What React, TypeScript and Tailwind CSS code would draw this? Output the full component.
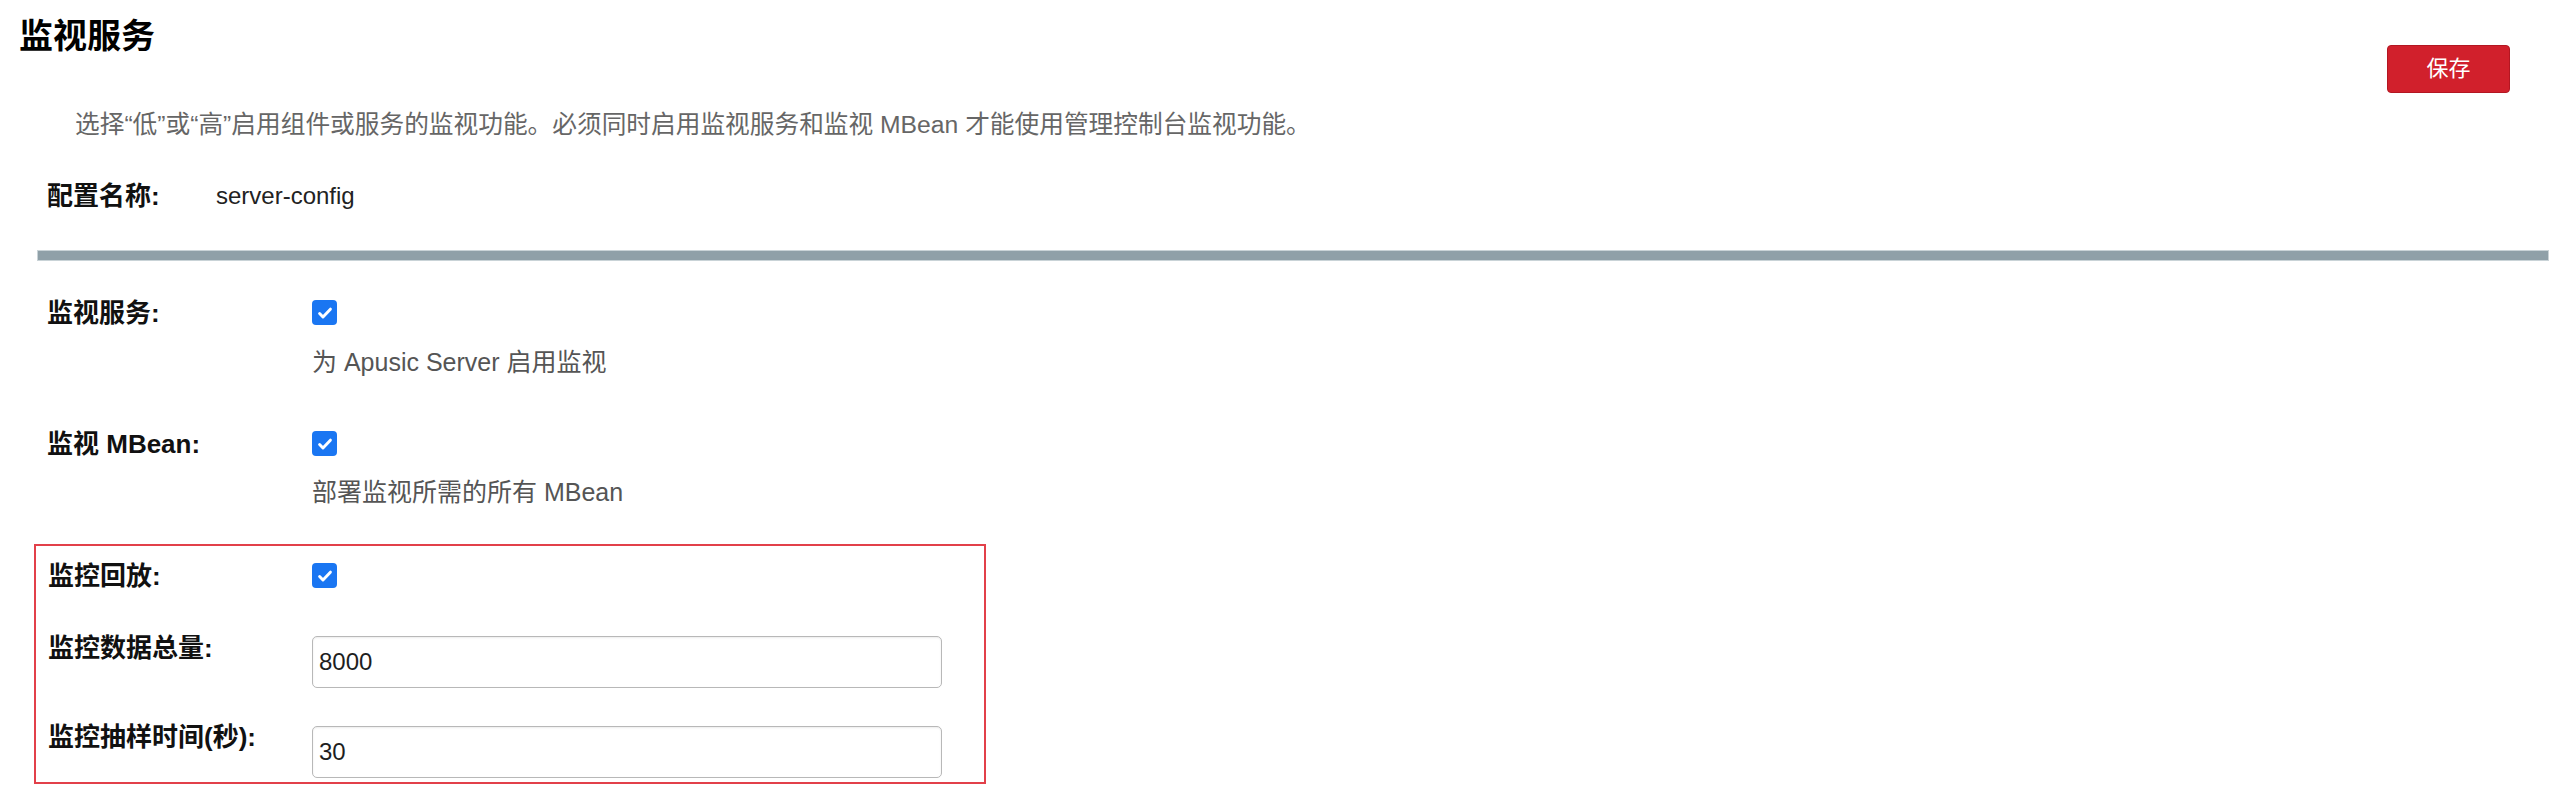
import React from 'react';

const FONT = "font-['Liberation_Sans','Noto_Sans_CJK_SC',sans-serif]";

function CheckBox() {
  return (
    <span className="flex items-center justify-center w-[25px] h-[25px] rounded-[4px] bg-[#1a76f2]">
      <svg width="18" height="18" viewBox="0 0 16 16" fill="none">
        <path d="M3.2 8.4l3 3.1L12.8 4.6" stroke="white" strokeWidth="2.6" strokeLinecap="round" strokeLinejoin="round" />
      </svg>
    </span>
  );
}

function TextField({ value }: { value: string }) {
  return (
    <input
      type="text"
      value={value}
      readOnly
      className={`${FONT} w-[630px] h-[52px] border border-[#b8b8b8] rounded-[5px] px-[6px] text-[24px] text-[#1e1e1e] bg-white shadow-[inset_0_1px_2px_rgba(0,0,0,0.08)] outline-none`}
    />
  );
}

export default function App() {
  return (
    <div className={`${FONT} min-h-screen bg-white text-[#111]`}>
      {/* Header */}
      <div className="flex justify-between items-start">
        <h1 className="ml-[19px] mt-[19px] text-[34px] leading-none font-bold text-black">监视服务</h1>
        <button className="mt-[45px] mr-[50px] w-[123px] h-[48px] rounded-[4px] bg-[#d1202c] border border-[#b31722] text-white text-[22px] leading-none">
          保存
        </button>
      </div>

      <p className="mt-[20px] ml-[75px] text-[24.7px] leading-[24px] text-[#666]">
        选择“低”或“高”启用组件或服务的监视功能。必须同时启用监视服务和监视 MBean 才能使用管理控制台监视功能。
      </p>

      <div className="mt-[47px] ml-[47px] flex items-center h-[24px]">
        <span className="w-[169px] font-bold text-[26px]">配置名称:</span>
        <span className="text-[24px] text-[#222]">server-config</span>
      </div>

      <div className="mt-[42px] ml-[37px] mr-[11px] h-[11px] bg-[#8fa0a8] border border-[#c9d3d7]" />

      {/* Form */}
      <div className="text-[25px] leading-[24px]">
        <div className="mt-[39px] flex items-center">
          <span className="ml-[47px] w-[265px] font-bold text-[26px]">监视服务:</span>
          <CheckBox />
        </div>
        <p className="mt-[25px] ml-[312px] text-[#555]">为 Apusic Server 启用监视</p>

        <div className="mt-[57px] flex items-center">
          <span className="ml-[47px] w-[265px] font-bold text-[26px]">监视 MBean:</span>
          <CheckBox />
        </div>
        <p className="mt-[24px] ml-[312px] text-[#555]">部署监视所需的所有 MBean</p>

        <div className="mt-[40px] ml-[34px] w-[952px] border-2 border-[#e2404a] pl-[12px] pt-[17px] pb-[4px]">
          <div className="flex items-center">
            <span className="w-[264px] font-bold text-[26px]">监控回放:</span>
            <CheckBox />
          </div>
          <div className="mt-[48px] flex items-start">
            <span className="w-[264px] font-bold text-[26px]">监控数据总量:</span>
            <TextField value="8000" />
          </div>
          <div className="mt-[38px] flex items-start">
            <span className="w-[264px] font-bold text-[26px] -mt-[1px]">监控抽样时间(秒):</span>
            <TextField value="30" />
          </div>
        </div>
      </div>
    </div>
  );
}
